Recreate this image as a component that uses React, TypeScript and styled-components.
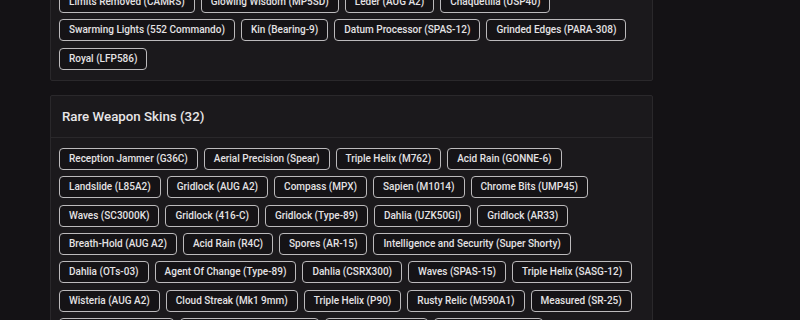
import React from "react";
import styled, { createGlobalStyle } from "styled-components";

const GlobalStyle = createGlobalStyle`
  html, body {
    margin: 0;
    padding: 0;
    background: #141215;
    overflow: hidden;
    font-family: Roboto, "Liberation Sans", sans-serif;
  }
`;

const Page = styled.div`
  display: flex;
  flex-direction: column;
  gap: 14px;
  padding-left: 50px;
  margin-top: -20px;
`;

const Panel = styled.section`
  width: 603px;
  box-sizing: border-box;
  background: #1b191c;
  border: 1px solid #2a282b;
  border-radius: 2px;
`;

const PanelHeader = styled.header`
  height: 41px;
  display: flex;
  align-items: center;
  padding: 0 11px;
  border-bottom: 1px solid #2a282b;
`;

const Title = styled.h2`
  margin: 0;
  font-size: 13.3px;
  font-weight: 500;
  color: #e8e6e8;
`;

const TagList = styled.div`
  display: flex;
  flex-wrap: wrap;
  gap: 6.4px 6px;
  padding: 10px 8px;
`;

const Tag = styled.span`
  display: inline-block;
  box-sizing: border-box;
  padding: 3px 9px;
  line-height: 14px;
  font-size: 10px;
  font-weight: 500;
  color: #e4e2e4;
  background: #151316;
  border: 1px solid #bcbabc;
  border-radius: 4px;
  white-space: nowrap;
`;

const epicSkins = [
  "Limits Removed (CAMRS)",
  "Glowing Wisdom (MP5SD)",
  "Leder (AUG A2)",
  "Chaquetilla (USP40)",
  "Swarming Lights (552 Commando)",
  "Kin (Bearing-9)",
  "Datum Processor (SPAS-12)",
  "Grinded Edges (PARA-308)",
  "Royal (LFP586)",
];

const rareSkins = [
  "Reception Jammer (G36C)",
  "Aerial Precision (Spear)",
  "Triple Helix (M762)",
  "Acid Rain (GONNE-6)",
  "Landslide (L85A2)",
  "Gridlock (AUG A2)",
  "Compass (MPX)",
  "Sapien (M1014)",
  "Chrome Bits (UMP45)",
  "Waves (SC3000K)",
  "Gridlock (416-C)",
  "Gridlock (Type-89)",
  "Dahlia (UZK50GI)",
  "Gridlock (AR33)",
  "Breath-Hold (AUG A2)",
  "Acid Rain (R4C)",
  "Spores (AR-15)",
  "Intelligence and Security (Super Shorty)",
  "Dahlia (OTs-03)",
  "Agent Of Change (Type-89)",
  "Dahlia (CSRX300)",
  "Waves (SPAS-15)",
  "Triple Helix (SASG-12)",
  "Wisteria (AUG A2)",
  "Cloud Streak (Mk1 9mm)",
  "Triple Helix (P90)",
  "Rusty Relic (M590A1)",
  "Measured (SR-25)",
  "Ember Trail (AUG A2)",
  "Hex Grid (552 Commando)",
  "Tidal Wave (P10C)",
  "Cobalt Core (AR-15)",
];

export default function App() {
  return (
    <>
      <GlobalStyle />
      <Page>
        <Panel>
          <TagList>
            {epicSkins.map((s) => (
              <Tag key={s}>{s}</Tag>
            ))}
          </TagList>
        </Panel>
        <Panel>
          <PanelHeader>
            <Title>Rare Weapon Skins ({rareSkins.length})</Title>
          </PanelHeader>
          <TagList>
            {rareSkins.map((s) => (
              <Tag key={s}>{s}</Tag>
            ))}
          </TagList>
        </Panel>
      </Page>
    </>
  );
}
